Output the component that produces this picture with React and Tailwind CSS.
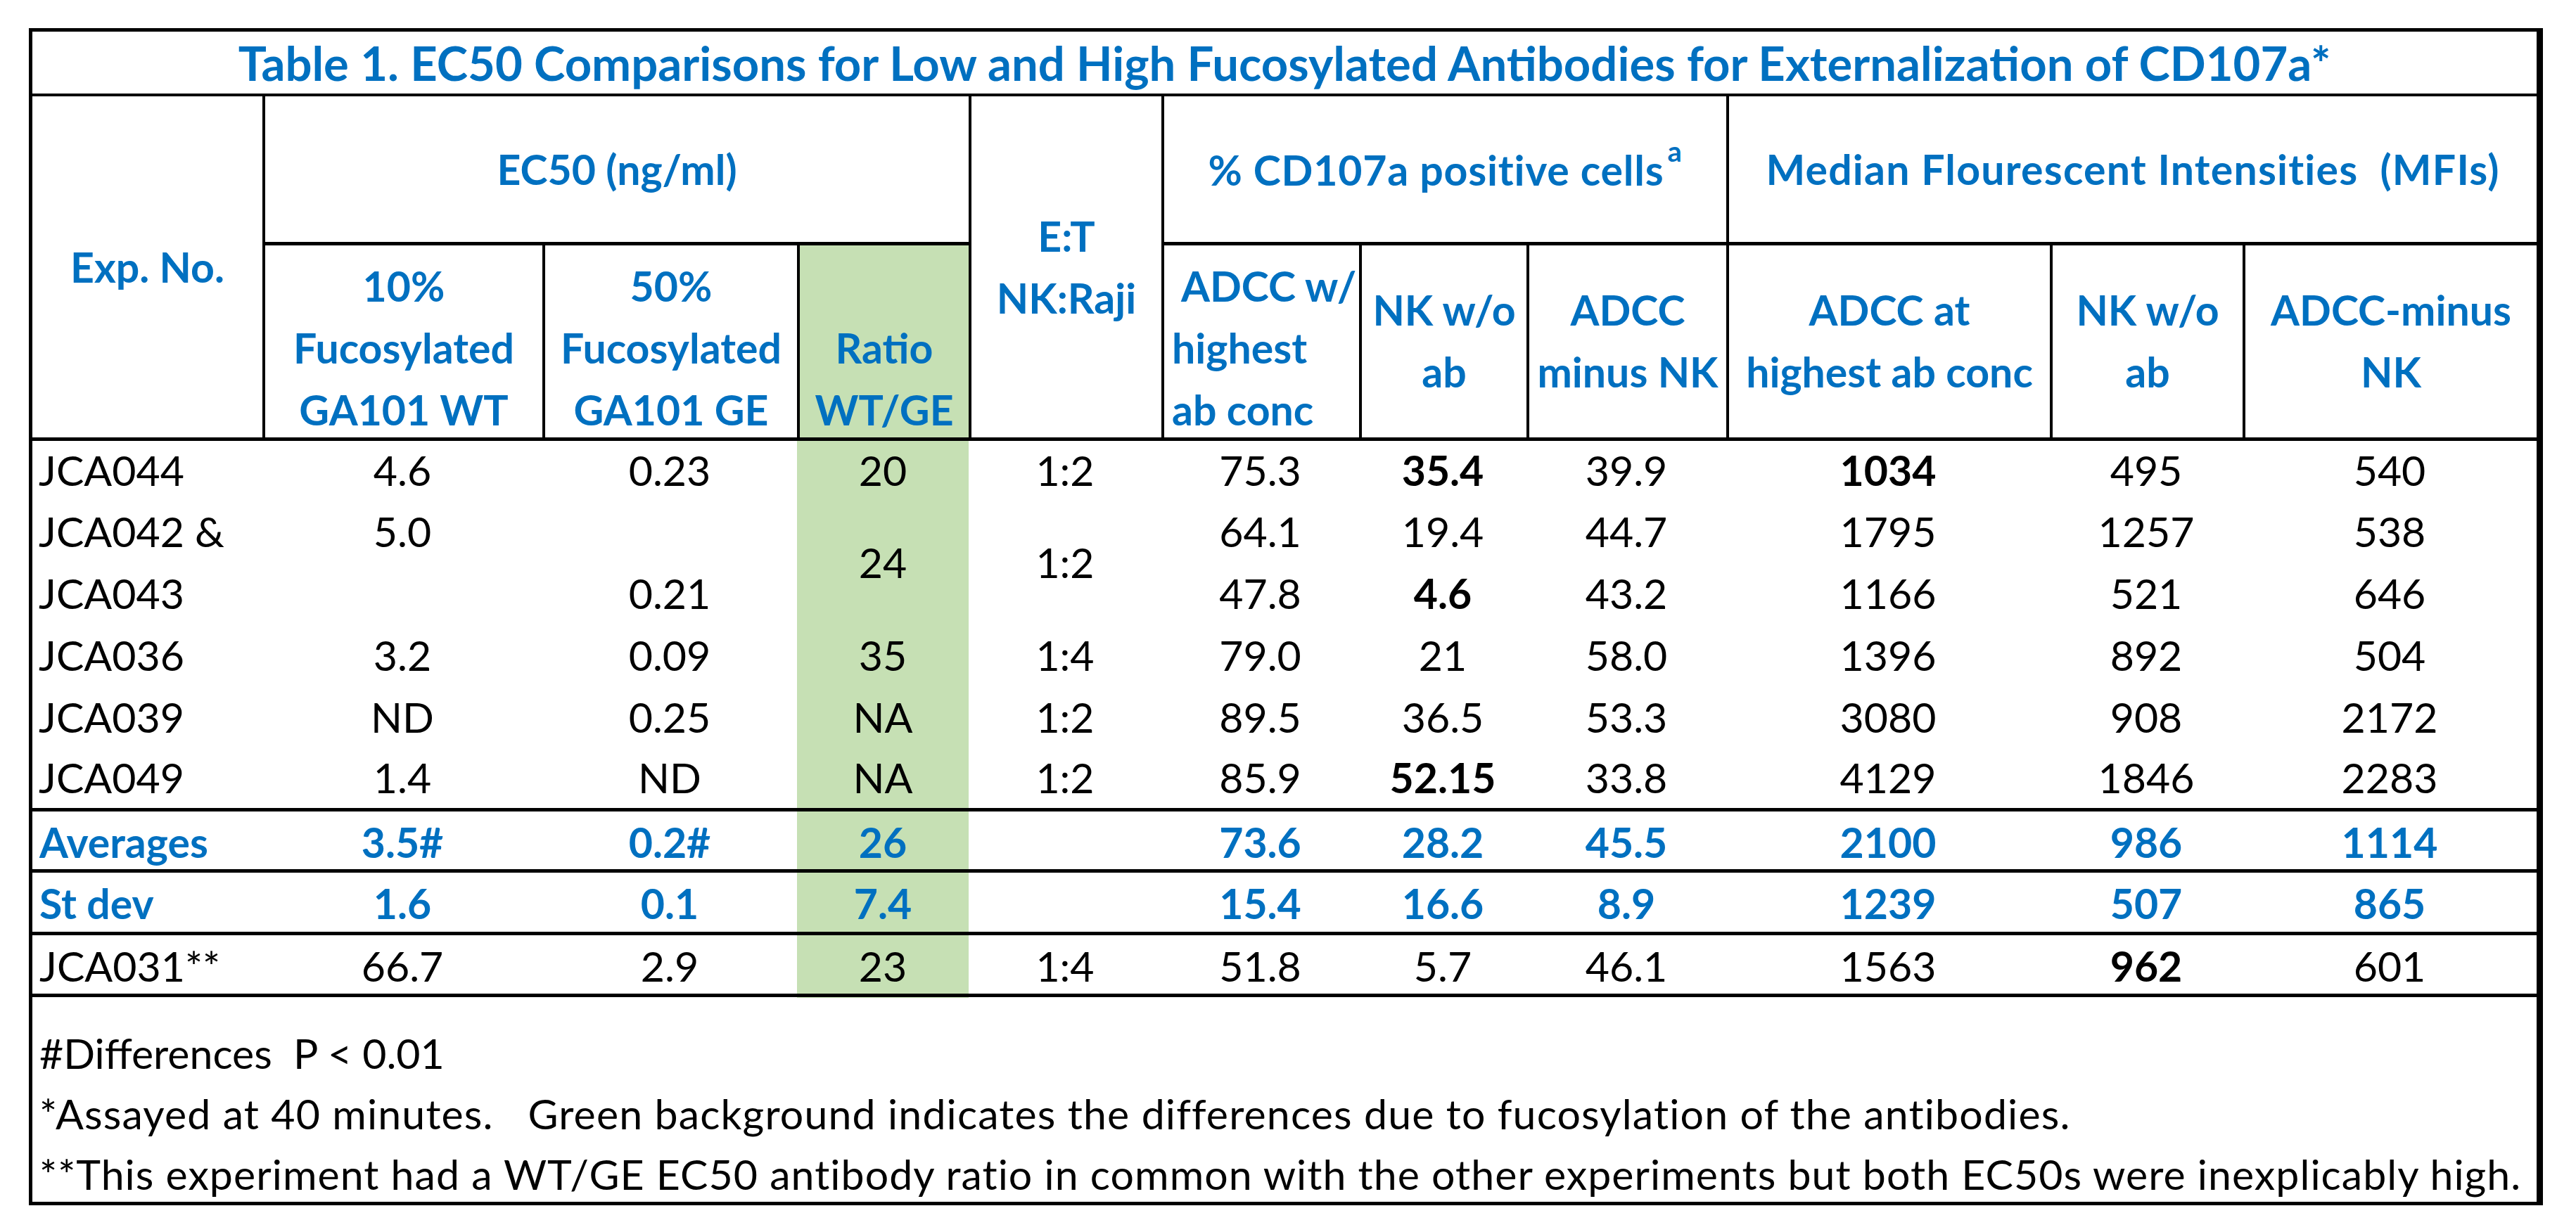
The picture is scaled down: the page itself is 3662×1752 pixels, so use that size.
import React from "react";

const COLS =
  "grid grid-cols-[327px_398px_362px_244px_274px_281px_238px_284px_460px_274px_418px]";
const BLUE = "text-[#0070c0]";
const GREEN = "bg-[#c6e0b4]";
const LINE = "border-black";

function C({ children, className = "", left, b }) {
  return (
    <div
      className={
        "flex items-center whitespace-pre " +
        (left ? "justify-start pl-[9px] " : "justify-center ") +
        (b ? "font-bold " : "") +
        className
      }
    >
      {children}
    </div>
  );
}

function Head({ lines, className = "", pad = "pt-[14px]" }) {
  return (
    <div
      className={`row-start-2 flex flex-col items-center justify-start border-l-[4px] border-b-[5px] ${LINE} ${pad} ${className}`}
    >
      {lines.map((l, i) => (
        <span key={i} className="whitespace-pre">
          {l}
        </span>
      ))}
    </div>
  );
}

function Header() {
  return (
    <div className={`${COLS} grid-rows-[212px_278px] font-bold ${BLUE} leading-[88px]`}>
      <div className={`col-start-1 row-start-1 row-span-2 flex items-center justify-center border-b-[5px] ${LINE}`}>
        Exp. No.
      </div>
      <div className={`col-start-2 col-span-3 row-start-1 flex items-center justify-center border-l-[4px] border-b-[5px] ${LINE}`}>
        EC50 (ng/ml)
      </div>
      <div className={`col-start-5 row-start-1 row-span-2 flex flex-col items-center justify-center border-l-[4px] border-b-[5px] ${LINE}`}>
        <span>E:T</span>
        <span>NK:Raji</span>
      </div>
      <div className={`col-start-6 col-span-3 row-start-1 flex items-center justify-center border-l-[4px] border-b-[5px] ${LINE}`}>
        <span className="tracking-[0.8px]">
          % CD107a positive cells<span className="align-[34px] text-[40px] leading-none ml-[5px]">a</span>
        </span>
      </div>
      <div className={`col-start-9 col-span-3 row-start-1 flex items-center justify-center whitespace-pre tracking-[1.2px] border-l-[4px] border-b-[5px] ${LINE}`}>
        {"Median Flourescent Intensities  (MFIs)"}
      </div>

      <Head className="col-start-2" lines={["10%", "Fucosylated", "GA101 WT"]} />
      <Head className="col-start-3" lines={["50%", "Fucosylated", "GA101 GE"]} />
      <Head className={`col-start-4 ${GREEN}`} pad="pt-[102px]" lines={["Ratio", "WT/GE"]} />
      <div className={`col-start-6 row-start-2 flex flex-col items-start justify-start pt-[14px] pl-[11px] border-l-[4px] border-b-[5px] ${LINE}`}>
        <span className="ml-[13px]">ADCC w/</span>
        <span>highest</span>
        <span>ab conc</span>
      </div>
      <Head className="col-start-7" pad="pt-[48px]" lines={["NK w/o", "ab"]} />
      <Head className="col-start-8" pad="pt-[48px]" lines={["ADCC", "minus NK"]} />
      <Head className="col-start-9" pad="pt-[48px]" lines={["ADCC at", "highest ab conc"]} />
      <Head className="col-start-10" pad="pt-[48px]" lines={["NK w/o", "ab"]} />
      <Head className="col-start-11" pad="pt-[48px]" lines={["ADCC-minus", "NK"]} />
    </div>
  );
}

function DataBlock() {
  return (
    <div className={`${COLS} grid-rows-[85px_88px_88px_88px_88px_85px]`}>
      <C left>JCA044</C>
      <C>4.6</C>
      <C>0.23</C>
      <C className={GREEN}>20</C>
      <C>1:2</C>
      <C>75.3</C>
      <C b>35.4</C>
      <C>39.9</C>
      <C b>1034</C>
      <C>495</C>
      <C>540</C>

      <C left>JCA042 &amp;</C>
      <C>5.0</C>
      <C></C>
      <C className={`row-span-2 ${GREEN}`}>24</C>
      <C className="row-span-2">1:2</C>
      <C>64.1</C>
      <C>19.4</C>
      <C>44.7</C>
      <C>1795</C>
      <C>1257</C>
      <C>538</C>

      <C left>JCA043</C>
      <C></C>
      <C>0.21</C>
      <C>47.8</C>
      <C b>4.6</C>
      <C>43.2</C>
      <C>1166</C>
      <C>521</C>
      <C>646</C>

      <C left>JCA036</C>
      <C>3.2</C>
      <C>0.09</C>
      <C className={GREEN}>35</C>
      <C>1:4</C>
      <C>79.0</C>
      <C>21</C>
      <C>58.0</C>
      <C>1396</C>
      <C>892</C>
      <C>504</C>

      <C left>JCA039</C>
      <C>ND</C>
      <C>0.25</C>
      <C className={GREEN}>NA</C>
      <C>1:2</C>
      <C>89.5</C>
      <C>36.5</C>
      <C>53.3</C>
      <C>3080</C>
      <C>908</C>
      <C>2172</C>

      <C left>JCA049</C>
      <C>1.4</C>
      <C>ND</C>
      <C className={GREEN}>NA</C>
      <C>1:2</C>
      <C>85.9</C>
      <C b>52.15</C>
      <C>33.8</C>
      <C>4129</C>
      <C>1846</C>
      <C>2283</C>
    </div>
  );
}

function Row({ cells, className = "", blue }) {
  return (
    <div className={`${COLS} border-t-[5px] ${LINE} ${blue ? `${BLUE} font-bold` : ""} ${className}`}>
      {cells.map((c, i) => {
        const bold = typeof c === "object" && c !== null;
        const text = bold ? c.b : c;
        return (
          <C
            key={i}
            left={i === 0}
            b={bold}
            className={`${i === 0 ? "pl-[10px]" : ""} ${i === 3 ? GREEN : ""}`}
          >
            {text}
          </C>
        );
      })}
    </div>
  );
}

export default function App() {
  return (
    <div className="w-[3662px] h-[1752px] bg-white pl-[41px] pt-[40px] font-[Lato,sans-serif] text-[59px] text-black">
      <div className={`w-[3574px] flex flex-col border-l-[5px] border-t-[5px] border-b-[5px] border-r-[9px] ${LINE}`}>
        <div className={`h-[92px] flex items-center justify-center border-b-[4px] ${LINE} text-[67px] font-bold ${BLUE}`}>
          Table 1. EC50 Comparisons for Low and High Fucosylated Antibodies for Externalization of CD107a*
        </div>
        <Header />
        <DataBlock />
        <Row
          blue
          className="h-[87px]"
          cells={["Averages", "3.5#", "0.2#", "26", "", "73.6", "28.2", "45.5", "2100", "986", "1114"]}
        />
        <Row
          blue
          className="h-[89px]"
          cells={["St dev", "1.6", "0.1", "7.4", "", "15.4", "16.6", "8.9", "1239", "507", "865"]}
        />
        <Row
          className="h-[88px]"
          cells={["JCA031**", "66.7", "2.9", "23", "1:4", "51.8", "5.7", "46.1", "1563", { b: "962" }, "601"]}
        />
        <div className={`h-[296px] border-t-[5px] ${LINE} pt-[37px] pl-[10px] leading-[86px] whitespace-pre`}>
          <div>{"#Differences  P < 0.01"}</div>
          <div className="tracking-[1.15px]">
            {"*Assayed at 40 minutes.   Green background indicates the differences due to fucosylation of the antibodies."}
          </div>
          <div className="tracking-[1.05px]">
            {"**This experiment had a WT/GE EC50 antibody ratio in common with the other experiments but both EC50s were inexplicably high."}
          </div>
        </div>
      </div>
    </div>
  );
}
